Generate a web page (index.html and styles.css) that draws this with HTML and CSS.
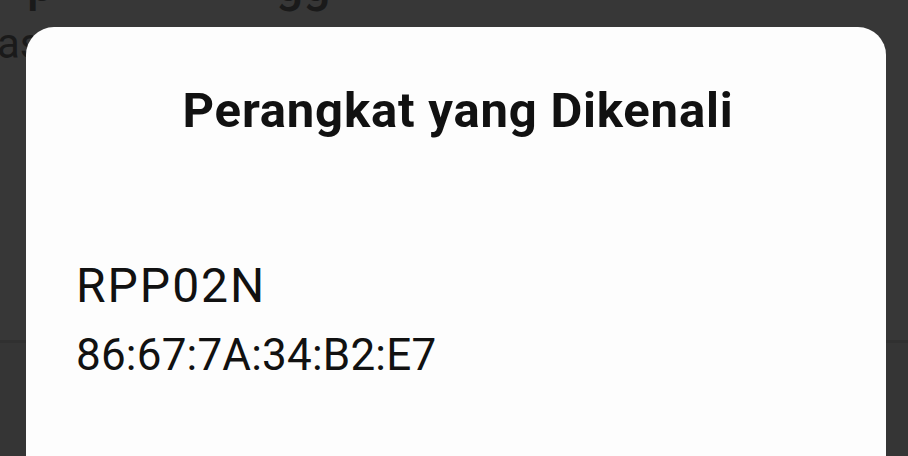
FILE: index.html
```html
<!DOCTYPE html>
<html lang="id">
<head>
<meta charset="utf-8">
<title>Perangkat yang Dikenali</title>
<link rel="stylesheet" href="styles.css">
</head>
<body>
<div class="screen">
  <div class="backdrop">
    <div class="bg-heading"><span class="bg-p">p</span><span class="bg-gg">gg</span></div>
    <div class="bg-sub">as</div>
  </div>
  <div class="bg-lower"></div>
  <div class="dialog">
    <h1 class="dialog-title">Perangkat yang Dikenali</h1>
    <div class="device">
      <div class="device-name">RPP02N</div>
      <div class="device-mac">86:67:7A:34:B2:E7</div>
    </div>
  </div>
</div>
</body>
</html>
```
FILE: styles.css
```css
html, body {
  margin: 0;
  padding: 0;
  width: 908px;
  height: 456px;
  overflow: hidden;
  background: #353535;
  font-family: Roboto, "Noto Sans", sans-serif;
}
.screen {
  position: relative;
  width: 908px;
  height: 456px;
  overflow: hidden;
}
.backdrop {
  height: 340px;
  background: #373737;
  border-bottom: 3px solid #303030;
  overflow: hidden;
}
.bg-lower {
  height: 113px;
  background: #353535;
}
.bg-heading {
  font-size: 48px;
  line-height: 40px;
  margin-top: -35px;
  color: #1a1a1a;
  font-weight: 500;
  display: flex;
}
.bg-p { margin-left: 27px; }
.bg-gg { margin-left: 222px; }
.bg-sub {
  font-size: 42px;
  line-height: 42px;
  margin-top: 18px;
  margin-left: -3px;
  color: #1a1a1a;
}
.dialog {
  position: absolute;
  left: 26px;
  top: 27px;
  width: 860px;
  height: 520px;
  background: #fdfdfd;
  border-radius: 28px;
  padding: 56px 46px 0 50px;
  box-sizing: border-box;
  display: flex;
  flex-direction: column;
}
.dialog-title {
  margin: 0;
  font-size: 49px;
  line-height: 56px;
  font-weight: 700;
  letter-spacing: 0.8px;
  color: #111;
  text-align: center;
}
.device {
  margin-top: 119px;
  display: flex;
  flex-direction: column;
  gap: 15px;
  color: #111;
}
.device-name {
  font-size: 48px;
  line-height: 56px;
  letter-spacing: 2px;
}
.device-mac {
  font-size: 44px;
  line-height: 52px;
  letter-spacing: 0.2px;
}
```
